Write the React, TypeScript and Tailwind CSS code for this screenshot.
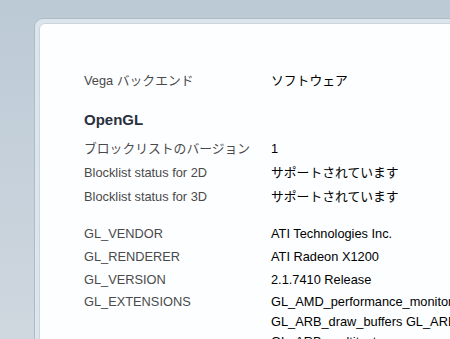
import React from 'react';

const font = { fontFamily: '"Liberation Sans", Arial, "Noto Sans CJK JP", sans-serif' };

const Row = ({ label, value, h = 'h-[24px] leading-[24px]' }: { label: string; value: string; h?: string }) => (
  <div className={`flex ${h} text-[12.8px]`}>
    <div className="w-[187px] shrink-0 text-[#4a4a4a]">{label}</div>
    <div className="text-black whitespace-nowrap">{value}</div>
  </div>
);

export default function App() {
  return (
    <div
      className="h-[339px] w-[450px] overflow-hidden bg-gradient-to-b from-[#bccad6] to-[#cfd7df] pl-[34px] pt-[18px]"
      style={font}
    >
      <div className="w-[520px] h-[400px] rounded-[9px] border border-[#aebcc9] bg-[#dde5ec] p-[4px]">
        <div className="h-full rounded-[6px] border border-[#cbd5de] bg-[#fdfeff] pl-[44px] pt-[45px]">
          <Row label="Vega バックエンド" value="ソフトウェア" h="h-[23px] leading-[23px]" />

          <h2 className="mt-[18px] text-[15px] leading-[20px] font-bold text-[#29313d]">OpenGL</h2>

          <div className="mt-[7px]">
            <Row label="ブロックリストのバージョン" value="1" />
            <Row label="Blocklist status for 2D" value="サポートされています" />
            <Row label="Blocklist status for 3D" value="サポートされています" />
          </div>

          <div className="mt-[13px]">
            <Row label="GL_VENDOR" value="ATI Technologies Inc." h="h-[23px] leading-[23px]" />
            <Row label="GL_RENDERER" value="ATI Radeon X1200" h="h-[23px] leading-[23px]" />
            <Row label="GL_VERSION" value="2.1.7410 Release" h="h-[23px] leading-[23px]" />
            <div className="flex pt-[1px] text-[12.8px] leading-[20px]">
              <div className="w-[187px] shrink-0 text-[#4a4a4a]">GL_EXTENSIONS</div>
              <div className="w-[305px] text-black">
                GL_AMD_performance_monitor GL_ARB_draw_buffers GL_ARB_imaging GL_ARB_multitexture GL_ARB_occlusion_query
              </div>
            </div>
          </div>
        </div>
      </div>
    </div>
  );
}
